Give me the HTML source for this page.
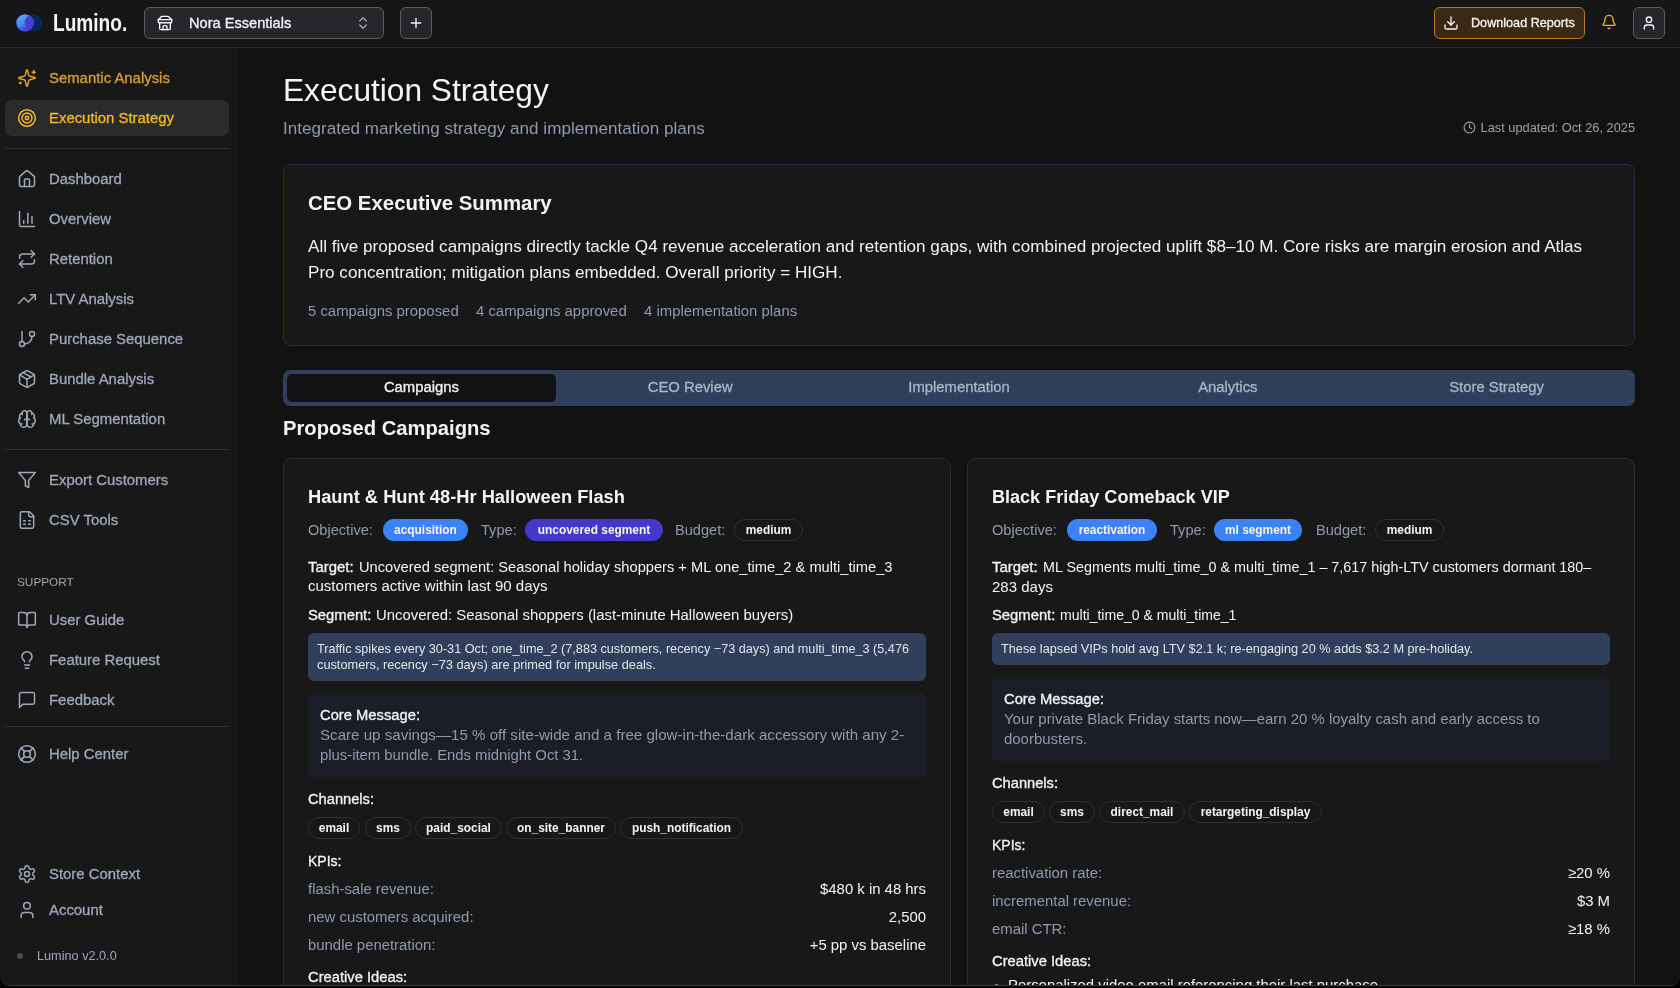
<!DOCTYPE html>
<html><head><meta charset="utf-8">
<style>
*{box-sizing:border-box;margin:0;padding:0}
html,body{width:1680px;height:988px;overflow:hidden;background:#000}
body{font-family:"Liberation Sans",sans-serif;color:#fff;position:relative}
.win{position:absolute;left:0;top:0;width:1680px;height:986px;background:#121212;overflow:hidden;will-change:transform;border-radius:0 0 9px 9px;border-bottom:1px solid #3c3d40}
.hdr{position:absolute;left:0;top:0;width:1680px;height:48px;background:#161616;border-bottom:1px solid #2a2a2a}
.side{position:absolute;left:0;top:48px;width:237px;height:940px;background:#181818}
.main{position:absolute;left:237px;top:48px;width:1443px;height:940px;background:#121212}
.abs{position:absolute}
svg{display:block}
.nowrap{white-space:nowrap}
.sl{left:49px;font-size:14.9px;line-height:20px;-webkit-text-stroke:0.3px currentColor}
.med{-webkit-text-stroke:0.3px currentColor}
</style></head><body>
<div class="win">
<!-- HEADER -->
<div class="hdr">
  <svg class="abs" style="left:14px;top:12px" width="30" height="22" viewBox="0 0 30 22">
    <defs>
      <linearGradient id="lg1" x1="0.1" y1="0" x2="0.6" y2="1"><stop offset="0" stop-color="#66acf8"/><stop offset="0.6" stop-color="#3d84f0"/><stop offset="0.85" stop-color="#4a45dc"/><stop offset="1" stop-color="#4b3cd6"/></linearGradient>
      <clipPath id="cpR"><circle cx="19.3" cy="10.9" r="8.7"/></clipPath>
    </defs>
    <circle cx="19.3" cy="10.9" r="8.7" fill="#0b2658"/>
    <circle cx="11" cy="10.9" r="8.7" fill="url(#lg1)"/>
    <circle cx="11" cy="10.9" r="8.7" fill="#4a3dd6" clip-path="url(#cpR)"/>
  </svg>
  <div class="abs nowrap" style="left:53px;top:8px;font-size:23px;font-weight:bold;color:#f4f4f5;line-height:30px;transform:scaleX(0.83);transform-origin:0 0">Lumino.</div>
  <div class="abs" style="left:144px;top:7px;width:240px;height:32px;background:#26272b;border:1px solid #5b5c60;border-radius:6px"></div>
  <svg class="abs" style="left:157px;top:15px" width="16" height="16" viewBox="0 0 24 24" fill="none" stroke="#fff" stroke-width="2" stroke-linecap="round" stroke-linejoin="round"><path d="m2 7 4.41-4.41A2 2 0 0 1 7.83 2h8.34a2 2 0 0 1 1.42.59L22 7"/><path d="M4 12v8a2 2 0 0 0 2 2h12a2 2 0 0 0 2-2v-8"/><path d="M15 22v-4a2 2 0 0 0-2-2h-2a2 2 0 0 0-2 2v4"/><path d="M2 7h20"/><path d="M22 7v3a2 2 0 0 1-2 2a2.7 2.7 0 0 1-1.59-.63.7.7 0 0 0-.82 0A2.7 2.7 0 0 1 16 12a2.7 2.7 0 0 1-1.59-.63.7.7 0 0 0-.82 0A2.7 2.7 0 0 1 12 12a2.7 2.7 0 0 1-1.59-.63.7.7 0 0 0-.82 0A2.7 2.7 0 0 1 8 12a2.7 2.7 0 0 1-1.59-.63.7.7 0 0 0-.82 0A2.7 2.7 0 0 1 4 12a2 2 0 0 1-2-2V7"/></svg>
  <div class="abs nowrap med" style="left:189px;top:13px;font-size:14.6px;line-height:20px;color:#f4f4f5">Nora Essentials</div>
  <svg class="abs" style="left:355px;top:15px" width="16" height="16" viewBox="0 0 24 24" fill="none" stroke="#a1a1aa" stroke-width="2" stroke-linecap="round" stroke-linejoin="round"><path d="m7 15 5 5 5-5"/><path d="m7 9 5-5 5 5"/></svg>
  <div class="abs" style="left:400px;top:7px;width:32px;height:32px;background:#26272b;border:1px solid #5b5c60;border-radius:6px"></div>
  <svg class="abs" style="left:408px;top:15px" width="16" height="16" viewBox="0 0 24 24" fill="none" stroke="#f4f4f5" stroke-width="2" stroke-linecap="round"><path d="M5 12h14"/><path d="M12 5v14"/></svg>

  <div class="abs" style="left:1434px;top:7px;width:151px;height:32px;background:#3a2a14;border:1px solid #b7791f;border-radius:6px"></div>
  <svg class="abs" style="left:1443px;top:15px" width="16" height="16" viewBox="0 0 24 24" fill="none" stroke="#f4f4f5" stroke-width="2" stroke-linecap="round" stroke-linejoin="round"><path d="M12 15V3"/><path d="M21 15v4a2 2 0 0 1-2 2H5a2 2 0 0 1-2-2v-4"/><path d="m7 10 5 5 5-5"/></svg>
  <div class="abs nowrap med" style="left:1471px;top:13px;font-size:12.64px;line-height:20px;color:#f4f4f5">Download Reports</div>
  <svg class="abs" style="left:1601px;top:14px" width="16" height="16" viewBox="0 0 24 24" fill="none" stroke="#f5b21c" stroke-width="2" stroke-linecap="round" stroke-linejoin="round"><path d="M10.268 21a2 2 0 0 0 3.464 0"/><path d="M3.262 15.326A1 1 0 0 0 4 17h16a1 1 0 0 0 .74-1.673C19.41 13.956 18 12.499 18 8A6 6 0 0 0 6 8c0 4.499-1.411 5.956-2.738 7.326"/></svg>
  <div class="abs" style="left:1633px;top:7px;width:32px;height:32px;background:#26272b;border:1px solid #5b5c60;border-radius:6px"></div>
  <svg class="abs" style="left:1641px;top:15px" width="16" height="16" viewBox="0 0 24 24" fill="none" stroke="#f4f4f5" stroke-width="2" stroke-linecap="round" stroke-linejoin="round"><path d="M19 21v-2a4 4 0 0 0-4-4H9a4 4 0 0 0-4 4v2"/><circle cx="12" cy="7" r="4"/></svg>
</div>

<!-- SIDEBAR -->
<div class="side" id="side">
<div class="abs" style="left:5px;top:52px;width:224px;height:36px;background:#2a2b2d;border-radius:7px"></div>
<div class="abs" style="left:5px;top:100px;width:224px;height:1px;background:#2e2f31"></div>
<div class="abs" style="left:5px;top:401px;width:224px;height:1px;background:#2e2f31"></div>
<div class="abs" style="left:5px;top:678px;width:224px;height:1px;background:#2e2f31"></div>
<svg class="abs" style="left:17px;top:20px" width="20" height="20" viewBox="0 0 24 24" fill="none" stroke="#d9a02b" stroke-width="1.8" stroke-linecap="round" stroke-linejoin="round"><path d="M9.937 15.5A2 2 0 0 0 8.5 14.063l-6.135-1.582a.5.5 0 0 1 0-.962L8.5 9.936A2 2 0 0 0 9.937 8.5l1.582-6.135a.5.5 0 0 1 .963 0L14.063 8.5A2 2 0 0 0 15.5 9.937l6.135 1.581a.5.5 0 0 1 0 .964L15.5 14.063a2 2 0 0 0-1.437 1.437l-1.582 6.135a.5.5 0 0 1-.963 0z"/><path d="M20 3v4"/><path d="M22 5h-4"/><path d="M4 17v2"/><path d="M5 18H3"/></svg>
<div class="abs nowrap sl" style="top:20px;color:#d9a02b">Semantic Analysis</div>
<svg class="abs" style="left:17px;top:60px" width="20" height="20" viewBox="0 0 24 24" fill="none" stroke="#f6b828" stroke-width="1.8" stroke-linecap="round" stroke-linejoin="round"><circle cx="12" cy="12" r="10"/><circle cx="12" cy="12" r="6"/><circle cx="12" cy="12" r="2"/></svg>
<div class="abs nowrap sl" style="top:60px;color:#f6b828">Execution Strategy</div>
<svg class="abs" style="left:17px;top:121px" width="20" height="20" viewBox="0 0 24 24" fill="none" stroke="#9ea8ba" stroke-width="1.8" stroke-linecap="round" stroke-linejoin="round"><path d="M15 21v-8a1 1 0 0 0-1-1h-4a1 1 0 0 0-1 1v8"/><path d="M3 10a2 2 0 0 1 .709-1.528l7-5.999a2 2 0 0 1 2.582 0l7 5.999A2 2 0 0 1 21 10v9a2 2 0 0 1-2 2H5a2 2 0 0 1-2-2z"/></svg>
<div class="abs nowrap sl" style="top:121px;color:#9ea8ba">Dashboard</div>
<svg class="abs" style="left:17px;top:161px" width="20" height="20" viewBox="0 0 24 24" fill="none" stroke="#9ea8ba" stroke-width="1.8" stroke-linecap="round" stroke-linejoin="round"><path d="M3 3v16a2 2 0 0 0 2 2h16"/><path d="M18 17V9"/><path d="M13 17V5"/><path d="M8 17v-3"/></svg>
<div class="abs nowrap sl" style="top:161px;color:#9ea8ba">Overview</div>
<svg class="abs" style="left:17px;top:201px" width="20" height="20" viewBox="0 0 24 24" fill="none" stroke="#9ea8ba" stroke-width="1.8" stroke-linecap="round" stroke-linejoin="round"><path d="m17 2 4 4-4 4"/><path d="M3 11v-1a4 4 0 0 1 4-4h14"/><path d="m7 22-4-4 4-4"/><path d="M21 13v1a4 4 0 0 1-4 4H3"/></svg>
<div class="abs nowrap sl" style="top:201px;color:#9ea8ba">Retention</div>
<svg class="abs" style="left:17px;top:241px" width="20" height="20" viewBox="0 0 24 24" fill="none" stroke="#9ea8ba" stroke-width="1.8" stroke-linecap="round" stroke-linejoin="round"><path d="M22 7 13.5 15.5 8.5 10.5 2 17"/><path d="M16 7h6v6"/></svg>
<div class="abs nowrap sl" style="top:241px;color:#9ea8ba">LTV Analysis</div>
<svg class="abs" style="left:17px;top:281px" width="20" height="20" viewBox="0 0 24 24" fill="none" stroke="#9ea8ba" stroke-width="1.8" stroke-linecap="round" stroke-linejoin="round"><line x1="6" x2="6" y1="3" y2="15"/><circle cx="18" cy="6" r="3"/><circle cx="6" cy="18" r="3"/><path d="M18 9a9 9 0 0 1-9 9"/></svg>
<div class="abs nowrap sl" style="top:281px;color:#9ea8ba">Purchase Sequence</div>
<svg class="abs" style="left:17px;top:321px" width="20" height="20" viewBox="0 0 24 24" fill="none" stroke="#9ea8ba" stroke-width="1.8" stroke-linecap="round" stroke-linejoin="round"><path d="M11 21.73a2 2 0 0 0 2 0l7-4A2 2 0 0 0 21 16V8a2 2 0 0 0-1-1.73l-7-4a2 2 0 0 0-2 0l-7 4A2 2 0 0 0 3 8v8a2 2 0 0 0 1 1.73z"/><path d="M12 22V12"/><path d="m3.3 7 7.703 4.734a2 2 0 0 0 1.994 0L20.7 7"/><path d="m7.5 4.27 9 5.15"/></svg>
<div class="abs nowrap sl" style="top:321px;color:#9ea8ba">Bundle Analysis</div>
<svg class="abs" style="left:17px;top:361px" width="20" height="20" viewBox="0 0 24 24" fill="none" stroke="#9ea8ba" stroke-width="1.8" stroke-linecap="round" stroke-linejoin="round"><path d="M12 5a3 3 0 1 0-5.997.125 4 4 0 0 0-2.526 5.77 4 4 0 0 0 .556 6.588A4 4 0 1 0 12 18Z"/><path d="M12 5a3 3 0 1 1 5.997.125 4 4 0 0 1 2.526 5.77 4 4 0 0 1-.556 6.588A4 4 0 1 1 12 18Z"/><path d="M15 13a4.5 4.5 0 0 1-3-4 4.5 4.5 0 0 1-3 4"/><path d="M17.599 6.5a3 3 0 0 0 .399-1.375"/><path d="M6.003 5.125A3 3 0 0 0 6.401 6.5"/><path d="M3.477 10.896a4 4 0 0 1 .585-.396"/><path d="M19.938 10.5a4 4 0 0 1 .585.396"/><path d="M6 18a4 4 0 0 1-1.967-.516"/><path d="M19.967 17.484A4 4 0 0 1 18 18"/></svg>
<div class="abs nowrap sl" style="top:361px;color:#9ea8ba">ML Segmentation</div>
<svg class="abs" style="left:17px;top:422px" width="20" height="20" viewBox="0 0 24 24" fill="none" stroke="#9ea8ba" stroke-width="1.8" stroke-linecap="round" stroke-linejoin="round"><polygon points="22 3 2 3 10 12.46 10 19 14 21 14 12.46 22 3"/></svg>
<div class="abs nowrap sl" style="top:422px;color:#9ea8ba">Export Customers</div>
<svg class="abs" style="left:17px;top:462px" width="20" height="20" viewBox="0 0 24 24" fill="none" stroke="#9ea8ba" stroke-width="1.8" stroke-linecap="round" stroke-linejoin="round"><path d="M15 2H6a2 2 0 0 0-2 2v16a2 2 0 0 0 2 2h12a2 2 0 0 0 2-2V7Z"/><path d="M14 2v4a2 2 0 0 0 2 2h4"/><path d="M8 13h2"/><path d="M14 13h2"/><path d="M8 17h2"/><path d="M14 17h2"/></svg>
<div class="abs nowrap sl" style="top:462px;color:#9ea8ba">CSV Tools</div>
<svg class="abs" style="left:17px;top:562px" width="20" height="20" viewBox="0 0 24 24" fill="none" stroke="#9ea8ba" stroke-width="1.8" stroke-linecap="round" stroke-linejoin="round"><path d="M12 7v14"/><path d="M3 18a1 1 0 0 1-1-1V4a1 1 0 0 1 1-1h5a4 4 0 0 1 4 4 4 4 0 0 1 4-4h5a1 1 0 0 1 1 1v13a1 1 0 0 1-1 1h-6a3 3 0 0 0-3 3 3 3 0 0 0-3-3z"/></svg>
<div class="abs nowrap sl" style="top:562px;color:#9ea8ba">User Guide</div>
<svg class="abs" style="left:17px;top:602px" width="20" height="20" viewBox="0 0 24 24" fill="none" stroke="#9ea8ba" stroke-width="1.8" stroke-linecap="round" stroke-linejoin="round"><path d="M15 14c.2-1 .7-1.7 1.5-2.5 1-.9 1.5-2.2 1.5-3.5A6 6 0 0 0 6 8c0 1 .2 2.2 1.5 3.5.7.7 1.3 1.5 1.5 2.5"/><path d="M9 18h6"/><path d="M10 22h4"/></svg>
<div class="abs nowrap sl" style="top:602px;color:#9ea8ba">Feature Request</div>
<svg class="abs" style="left:17px;top:642px" width="20" height="20" viewBox="0 0 24 24" fill="none" stroke="#9ea8ba" stroke-width="1.8" stroke-linecap="round" stroke-linejoin="round"><path d="M21 15a2 2 0 0 1-2 2H7l-4 4V5a2 2 0 0 1 2-2h14a2 2 0 0 1 2 2z"/></svg>
<div class="abs nowrap sl" style="top:642px;color:#9ea8ba">Feedback</div>
<svg class="abs" style="left:17px;top:696px" width="20" height="20" viewBox="0 0 24 24" fill="none" stroke="#9ea8ba" stroke-width="1.8" stroke-linecap="round" stroke-linejoin="round"><circle cx="12" cy="12" r="10"/><path d="m4.93 4.93 4.24 4.24"/><path d="m14.83 9.17 4.24-4.24"/><path d="m14.83 14.83 4.24 4.24"/><path d="m9.17 14.83-4.24 4.24"/><circle cx="12" cy="12" r="4"/></svg>
<div class="abs nowrap sl" style="top:696px;color:#9ea8ba">Help Center</div>
<svg class="abs" style="left:17px;top:816px" width="20" height="20" viewBox="0 0 24 24" fill="none" stroke="#9ea8ba" stroke-width="1.8" stroke-linecap="round" stroke-linejoin="round"><path d="M12.22 2h-.44a2 2 0 0 0-2 2v.18a2 2 0 0 1-1 1.73l-.43.25a2 2 0 0 1-2 0l-.15-.08a2 2 0 0 0-2.73.73l-.22.38a2 2 0 0 0 .73 2.73l.15.1a2 2 0 0 1 1 1.72v.51a2 2 0 0 1-1 1.74l-.15.09a2 2 0 0 0-.73 2.73l.22.38a2 2 0 0 0 2.730.73l.15-.08a2 2 0 0 1 2 0l.43.25a2 2 0 0 1 1 1.73V20a2 2 0 0 0 2 2h.44a2 2 0 0 0 2-2v-.18a2 2 0 0 1 1-1.73l.43-.25a2 2 0 0 1 2 0l.15.08a2 2 0 0 0 2.73-.73l.22-.39a2 2 0 0 0-.73-2.73l-.15-.08a2 2 0 0 1-1-1.74v-.5a2 2 0 0 1 1-1.74l.15-.09a2 2 0 0 0 .73-2.73l-.22-.38a2 2 0 0 0-2.73-.73l-.15.08a2 2 0 0 1-2 0l-.43-.25a2 2 0 0 1-1-1.73V4a2 2 0 0 0-2-2z"/><circle cx="12" cy="12" r="3"/></svg>
<div class="abs nowrap sl" style="top:816px;color:#9ea8ba">Store Context</div>
<svg class="abs" style="left:17px;top:852px" width="20" height="20" viewBox="0 0 24 24" fill="none" stroke="#9ea8ba" stroke-width="1.8" stroke-linecap="round" stroke-linejoin="round"><path d="M19 21v-2a4 4 0 0 0-4-4H9a4 4 0 0 0-4 4v2"/><circle cx="12" cy="7" r="4"/></svg>
<div class="abs nowrap sl" style="top:852px;color:#9ea8ba">Account</div>
<div class="abs nowrap" style="left:17px;top:525px;font-size:11.8px;line-height:18px;color:#a3a6ad">SUPPORT</div>
<div class="abs" style="left:17px;top:905px;width:6px;height:6px;border-radius:3px;background:#4a4b4e"></div>
<div class="abs nowrap" style="left:37px;top:899px;font-size:12.7px;line-height:18px;color:#9ea8ba">Lumino v2.0.0</div>
</div>

<!-- MAIN -->
<div class="main" id="main"></div>
<div class="abs nowrap" style="left:283px;top:72.23px;font-size:31.66px;line-height:36px;color:#f4f4f5;">Execution Strategy</div>
<div class="abs nowrap" style="left:283px;top:116.87px;font-size:17.1px;line-height:24px;color:#8e9ab0;">Integrated marketing strategy and implementation plans</div>
<svg class="abs" style="left:1463px;top:121px" width="13" height="13" viewBox="0 0 24 24" fill="none" stroke="#a1a1aa" stroke-width="2" stroke-linecap="round" stroke-linejoin="round"><circle cx="12" cy="12" r="10"/><polyline points="12 6 12 12 16 14"/></svg>
<div class="abs nowrap" style="right:45px;top:119.76px;font-size:12.8px;line-height:16px;color:#a1a1aa;">Last updated: Oct 26, 2025</div>
<div class="abs" style="left:283px;top:164px;width:1352px;height:182px;background:#181818;border:1px solid #1e2e48;border-radius:8px;"></div>
<div class="abs nowrap" style="left:308px;top:188.73px;font-size:20.4px;line-height:28px;color:#f4f4f5;font-weight:bold;">CEO Executive Summary</div>
<div class="abs nowrap" style="left:308px;top:234.27px;font-size:17.1px;line-height:26px;color:#f4f4f5;">All five proposed campaigns directly tackle Q4 revenue acceleration and retention gaps, with combined projected uplift $8–10 M. Core risks are margin erosion and Atlas</div>
<div class="abs nowrap" style="left:308px;top:260.07px;font-size:17.1px;line-height:26px;color:#f4f4f5;">Pro concentration; mitigation plans embedded. Overall priority = HIGH.</div>
<div class="abs nowrap" style="left:308px;top:300.84px;font-size:14.9px;line-height:20px;color:#8e9ab0;">5 campaigns proposed</div>
<div class="abs nowrap" style="left:476px;top:300.84px;font-size:14.9px;line-height:20px;color:#8e9ab0;">4 campaigns approved</div>
<div class="abs nowrap" style="left:644px;top:300.84px;font-size:14.9px;line-height:20px;color:#8e9ab0;">4 implementation plans</div>
<div class="abs" style="left:283px;top:370px;width:1352px;height:36px;background:#30405c;border-radius:7px;"></div>
<div class="abs" style="left:287px;top:374px;width:269px;height:28px;background:#121212;border-radius:5px;"></div>
<div class="abs nowrap" style="left:21.399999999999977px;width:800px;text-align:center;top:377.06px;font-size:14.83px;line-height:20px;color:#f4f4f5;-webkit-text-stroke:0.3px currentColor;">Campaigns</div>
<div class="abs nowrap" style="left:290.20000000000005px;width:800px;text-align:center;top:377.06px;font-size:14.83px;line-height:20px;color:#a9b4c5;-webkit-text-stroke:0.3px currentColor;">CEO Review</div>
<div class="abs nowrap" style="left:559.0px;width:800px;text-align:center;top:377.06px;font-size:14.83px;line-height:20px;color:#a9b4c5;-webkit-text-stroke:0.3px currentColor;">Implementation</div>
<div class="abs nowrap" style="left:827.8px;width:800px;text-align:center;top:377.06px;font-size:14.83px;line-height:20px;color:#a9b4c5;-webkit-text-stroke:0.3px currentColor;">Analytics</div>
<div class="abs nowrap" style="left:1096.6px;width:800px;text-align:center;top:377.06px;font-size:14.83px;line-height:20px;color:#a9b4c5;-webkit-text-stroke:0.3px currentColor;">Store Strategy</div>
<div class="abs nowrap" style="left:283px;top:414.00px;font-size:20.2px;line-height:28px;color:#f4f4f5;font-weight:bold;">Proposed Campaigns</div>
<div class="abs" style="left:283px;top:458px;width:668px;height:560px;background:#181818;border:1px solid #2b2e2d;border-radius:9px;"></div>
<div class="abs nowrap" style="left:308px;top:483.26px;font-size:18.3px;line-height:28px;color:#f4f4f5;font-weight:bold;">Haunt &amp; Hunt 48-Hr Halloween Flash</div>
<div class="abs nowrap" style="left:308px;top:519.64px;font-size:14.6px;line-height:20px;color:#8e9ab0;">Objective:</div>
<div class="abs" style="left:383px;top:519px;width:85px;height:22px;background:#3b82f6;border-radius:11px;"></div>
<div class="abs nowrap" style="left:25.5px;width:800px;text-align:center;top:521.88px;font-size:11.9px;line-height:16px;color:#f4f4f5;font-weight:bold;">acquisition</div>
<div class="abs nowrap" style="left:481px;top:519.64px;font-size:14.6px;line-height:20px;color:#8e9ab0;">Type:</div>
<div class="abs" style="left:525px;top:519px;width:138px;height:22px;background:#4338ca;border-radius:11px;"></div>
<div class="abs nowrap" style="left:194.0px;width:800px;text-align:center;top:521.88px;font-size:11.9px;line-height:16px;color:#f4f4f5;font-weight:bold;">uncovered segment</div>
<div class="abs nowrap" style="left:675px;top:519.64px;font-size:14.6px;line-height:20px;color:#8e9ab0;">Budget:</div>
<div class="abs" style="left:734px;top:519px;width:69px;height:22px;background:none;border:1px solid #303033;border-radius:11px;"></div>
<div class="abs nowrap" style="left:368.5px;width:800px;text-align:center;top:521.88px;font-size:11.9px;line-height:16px;color:#f4f4f5;font-weight:bold;">medium</div>
<div class="abs nowrap" style="left:308px;top:556.54px;font-size:14.9px;line-height:20px;color:#f4f4f5;-webkit-text-stroke:0.3px currentColor;">Target:</div>
<div class="abs nowrap" style="left:359px;top:556.62px;font-size:14.66px;line-height:20px;color:#f4f4f5;">Uncovered segment: Seasonal holiday shoppers + ML one_time_2 &amp; multi_time_3</div>
<div class="abs nowrap" style="left:308px;top:576.49px;font-size:15.03px;line-height:20px;color:#f4f4f5;">customers active within last 90 days</div>
<div class="abs nowrap" style="left:308px;top:604.57px;font-size:14.8px;line-height:20px;color:#f4f4f5;-webkit-text-stroke:0.3px currentColor;">Segment:</div>
<div class="abs nowrap" style="left:376px;top:604.54px;font-size:14.9px;line-height:20px;color:#f4f4f5;">Uncovered: Seasonal shoppers (last-minute Halloween buyers)</div>
<div class="abs" style="left:308px;top:633.2px;width:618px;height:48px;background:#30405c;border-radius:6px;"></div>
<div class="abs nowrap" style="left:317px;top:640.81px;font-size:12.66px;line-height:16px;color:#e4e4e7;">Traffic spikes every 30-31 Oct; one_time_2 (7,883 customers, recency −73 days) and multi_time_3 (5,476</div>
<div class="abs nowrap" style="left:317px;top:656.78px;font-size:12.77px;line-height:16px;color:#e4e4e7;">customers, recency −73 days) are primed for impulse deals.</div>
<div class="abs" style="left:308px;top:693.2px;width:618px;height:84px;background:#1b1e26;border-radius:6px;"></div>
<div class="abs nowrap" style="left:320px;top:705.09px;font-size:14.75px;line-height:20px;color:#f4f4f5;-webkit-text-stroke:0.3px currentColor;">Core Message:</div>
<div class="abs nowrap" style="left:320px;top:724.96px;font-size:15.12px;line-height:20px;color:#8e9ab0;">Scare up savings—15 % off site-wide and a free glow-in-the-dark accessory with any 2-</div>
<div class="abs nowrap" style="left:320px;top:745.05px;font-size:14.85px;line-height:20px;color:#8e9ab0;">plus-item bundle. Ends midnight Oct 31.</div>
<div class="abs nowrap" style="left:308px;top:789.12px;font-size:14.66px;line-height:20px;color:#f4f4f5;-webkit-text-stroke:0.3px currentColor;">Channels:</div>
<div class="abs" style="left:308px;top:817.2px;width:52px;height:22px;background:none;border:1px solid #303033;border-radius:11px;"></div>
<div class="abs nowrap" style="left:-66.0px;width:800px;text-align:center;top:820.08px;font-size:11.9px;line-height:16px;color:#f4f4f5;font-weight:bold;">email</div>
<div class="abs" style="left:365px;top:817.2px;width:46px;height:22px;background:none;border:1px solid #303033;border-radius:11px;"></div>
<div class="abs nowrap" style="left:-12.0px;width:800px;text-align:center;top:820.08px;font-size:11.9px;line-height:16px;color:#f4f4f5;font-weight:bold;">sms</div>
<div class="abs" style="left:415px;top:817.2px;width:87px;height:22px;background:none;border:1px solid #303033;border-radius:11px;"></div>
<div class="abs nowrap" style="left:58.5px;width:800px;text-align:center;top:820.08px;font-size:11.9px;line-height:16px;color:#f4f4f5;font-weight:bold;">paid_social</div>
<div class="abs" style="left:506px;top:817.2px;width:110px;height:22px;background:none;border:1px solid #303033;border-radius:11px;"></div>
<div class="abs nowrap" style="left:161.0px;width:800px;text-align:center;top:820.08px;font-size:11.9px;line-height:16px;color:#f4f4f5;font-weight:bold;">on_site_banner</div>
<div class="abs" style="left:620px;top:817.2px;width:123px;height:22px;background:none;border:1px solid #303033;border-radius:11px;"></div>
<div class="abs nowrap" style="left:281.5px;width:800px;text-align:center;top:820.08px;font-size:11.9px;line-height:16px;color:#f4f4f5;font-weight:bold;">push_notification</div>
<div class="abs nowrap" style="left:308px;top:851.35px;font-size:14.0px;line-height:20px;color:#f4f4f5;-webkit-text-stroke:0.3px currentColor;">KPIs:</div>
<div class="abs nowrap" style="left:308px;top:879.04px;font-size:14.9px;line-height:20px;color:#8e9ab0;">flash-sale revenue:</div>
<div class="abs nowrap" style="right:754px;top:879.04px;font-size:14.9px;line-height:20px;color:#f4f4f5;">$480 k in 48 hrs</div>
<div class="abs nowrap" style="left:308px;top:907.04px;font-size:14.9px;line-height:20px;color:#8e9ab0;">new customers acquired:</div>
<div class="abs nowrap" style="right:754px;top:907.04px;font-size:14.9px;line-height:20px;color:#f4f4f5;">2,500</div>
<div class="abs nowrap" style="left:308px;top:935.04px;font-size:14.9px;line-height:20px;color:#8e9ab0;">bundle penetration:</div>
<div class="abs nowrap" style="right:754px;top:935.04px;font-size:14.9px;line-height:20px;color:#f4f4f5;">+5 pp vs baseline</div>
<div class="abs nowrap" style="left:308px;top:967.09px;font-size:14.76px;line-height:20px;color:#f4f4f5;-webkit-text-stroke:0.3px currentColor;">Creative Ideas:</div>
<div class="abs" style="left:967px;top:458px;width:668px;height:560px;background:#181818;border:1px solid #2b2e2d;border-radius:9px;"></div>
<div class="abs nowrap" style="left:992px;top:483.34px;font-size:18.06px;line-height:28px;color:#f4f4f5;font-weight:bold;">Black Friday Comeback VIP</div>
<div class="abs nowrap" style="left:992px;top:519.64px;font-size:14.6px;line-height:20px;color:#8e9ab0;">Objective:</div>
<div class="abs" style="left:1067px;top:519px;width:90px;height:22px;background:#3b82f6;border-radius:11px;"></div>
<div class="abs nowrap" style="left:712.0px;width:800px;text-align:center;top:521.88px;font-size:11.9px;line-height:16px;color:#f4f4f5;font-weight:bold;">reactivation</div>
<div class="abs nowrap" style="left:1170px;top:519.64px;font-size:14.6px;line-height:20px;color:#8e9ab0;">Type:</div>
<div class="abs" style="left:1214px;top:519px;width:88px;height:22px;background:#3b82f6;border-radius:11px;"></div>
<div class="abs nowrap" style="left:858.0px;width:800px;text-align:center;top:521.88px;font-size:11.9px;line-height:16px;color:#f4f4f5;font-weight:bold;">ml segment</div>
<div class="abs nowrap" style="left:1316px;top:519.64px;font-size:14.6px;line-height:20px;color:#8e9ab0;">Budget:</div>
<div class="abs" style="left:1375px;top:519px;width:69px;height:22px;background:none;border:1px solid #303033;border-radius:11px;"></div>
<div class="abs nowrap" style="left:1009.5px;width:800px;text-align:center;top:521.88px;font-size:11.9px;line-height:16px;color:#f4f4f5;font-weight:bold;">medium</div>
<div class="abs nowrap" style="left:992px;top:556.54px;font-size:14.9px;line-height:20px;color:#f4f4f5;-webkit-text-stroke:0.3px currentColor;">Target:</div>
<div class="abs nowrap" style="left:1043px;top:556.72px;font-size:14.36px;line-height:20px;color:#f4f4f5;">ML Segments multi_time_0 &amp; multi_time_1 – 7,617 high-LTV customers dormant 180–</div>
<div class="abs nowrap" style="left:992px;top:576.50px;font-size:15.0px;line-height:20px;color:#f4f4f5;">283 days</div>
<div class="abs nowrap" style="left:992px;top:604.57px;font-size:14.8px;line-height:20px;color:#f4f4f5;-webkit-text-stroke:0.3px currentColor;">Segment:</div>
<div class="abs nowrap" style="left:1060px;top:604.83px;font-size:14.05px;line-height:20px;color:#f4f4f5;">multi_time_0 &amp; multi_time_1</div>
<div class="abs" style="left:992px;top:633.2px;width:618px;height:32px;background:#30405c;border-radius:6px;"></div>
<div class="abs nowrap" style="left:1001px;top:640.80px;font-size:12.71px;line-height:16px;color:#e4e4e7;">These lapsed VIPs hold avg LTV $2.1 k; re-engaging 20 % adds $3.2 M pre-holiday.</div>
<div class="abs" style="left:992px;top:677.2px;width:618px;height:84px;background:#1b1e26;border-radius:6px;"></div>
<div class="abs nowrap" style="left:1004px;top:689.09px;font-size:14.75px;line-height:20px;color:#f4f4f5;-webkit-text-stroke:0.3px currentColor;">Core Message:</div>
<div class="abs nowrap" style="left:1004px;top:709.02px;font-size:14.95px;line-height:20px;color:#8e9ab0;">Your private Black Friday starts now—earn 20 % loyalty cash and early access to</div>
<div class="abs nowrap" style="left:1004px;top:729.02px;font-size:14.95px;line-height:20px;color:#8e9ab0;">doorbusters.</div>
<div class="abs nowrap" style="left:992px;top:773.12px;font-size:14.66px;line-height:20px;color:#f4f4f5;-webkit-text-stroke:0.3px currentColor;">Channels:</div>
<div class="abs" style="left:992px;top:801.2px;width:53px;height:22px;background:none;border:1px solid #303033;border-radius:11px;"></div>
<div class="abs nowrap" style="left:618.5px;width:800px;text-align:center;top:804.08px;font-size:11.9px;line-height:16px;color:#f4f4f5;font-weight:bold;">email</div>
<div class="abs" style="left:1049px;top:801.2px;width:46px;height:22px;background:none;border:1px solid #303033;border-radius:11px;"></div>
<div class="abs nowrap" style="left:672.0px;width:800px;text-align:center;top:804.08px;font-size:11.9px;line-height:16px;color:#f4f4f5;font-weight:bold;">sms</div>
<div class="abs" style="left:1099px;top:801.2px;width:86px;height:22px;background:none;border:1px solid #303033;border-radius:11px;"></div>
<div class="abs nowrap" style="left:742.0px;width:800px;text-align:center;top:804.08px;font-size:11.9px;line-height:16px;color:#f4f4f5;font-weight:bold;">direct_mail</div>
<div class="abs" style="left:1189px;top:801.2px;width:133px;height:22px;background:none;border:1px solid #303033;border-radius:11px;"></div>
<div class="abs nowrap" style="left:855.5px;width:800px;text-align:center;top:804.08px;font-size:11.9px;line-height:16px;color:#f4f4f5;font-weight:bold;">retargeting_display</div>
<div class="abs nowrap" style="left:992px;top:835.35px;font-size:14.0px;line-height:20px;color:#f4f4f5;-webkit-text-stroke:0.3px currentColor;">KPIs:</div>
<div class="abs nowrap" style="left:992px;top:863.04px;font-size:14.9px;line-height:20px;color:#8e9ab0;">reactivation rate:</div>
<div class="abs nowrap" style="right:70px;top:863.04px;font-size:14.9px;line-height:20px;color:#f4f4f5;">≥20 %</div>
<div class="abs nowrap" style="left:992px;top:891.04px;font-size:14.9px;line-height:20px;color:#8e9ab0;">incremental revenue:</div>
<div class="abs nowrap" style="right:70px;top:891.04px;font-size:14.9px;line-height:20px;color:#f4f4f5;">$3 M</div>
<div class="abs nowrap" style="left:992px;top:919.04px;font-size:14.9px;line-height:20px;color:#8e9ab0;">email CTR:</div>
<div class="abs nowrap" style="right:70px;top:919.04px;font-size:14.9px;line-height:20px;color:#f4f4f5;">≥18 %</div>
<div class="abs nowrap" style="left:992px;top:951.09px;font-size:14.76px;line-height:20px;color:#f4f4f5;-webkit-text-stroke:0.3px currentColor;">Creative Ideas:</div>
<div class="abs" style="left:994px;top:984.2px;width:5px;height:5px;border-radius:3px;background:#8e9ab0"></div>
<div class="abs nowrap" style="left:1008px;top:975.04px;font-size:14.9px;line-height:20px;color:#f4f4f5;">Personalized video email referencing their last purchase</div>
</div>
</body></html>
